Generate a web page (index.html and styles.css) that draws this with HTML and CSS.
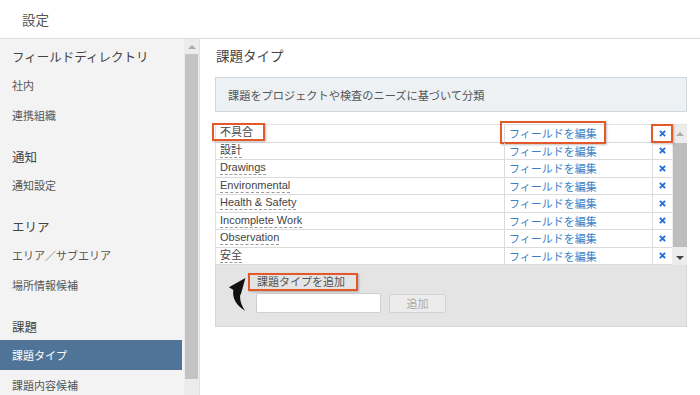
FILE: index.html
```html
<!DOCTYPE html>
<html lang="ja">
<head>
<meta charset="utf-8">
<title>設定</title>
<link rel="stylesheet" href="styles.css">
</head>
<body>
<header class="topbar"><span class="title">設定</span></header>
<div class="layout">
  <aside class="sidebar">
    <nav class="nav">
      <div class="group">
        <div class="group-title">フィールドディレクトリ</div>
        <a class="item">社内</a>
        <a class="item">連携組織</a>
      </div>
      <div class="group">
        <div class="group-title">通知</div>
        <a class="item">通知設定</a>
      </div>
      <div class="group">
        <div class="group-title">エリア</div>
        <a class="item">エリア／サブエリア</a>
        <a class="item">場所情報候補</a>
      </div>
      <div class="group">
        <div class="group-title">課題</div>
        <a class="item active">課題タイプ</a>
        <a class="item">課題内容候補</a>
      </div>
    </nav>
    <div class="vscroll">
      <div class="sb-up"></div>
      <div class="sb-thumb"></div>
    </div>
  </aside>
  <main class="main">
    <h1 class="heading">課題タイプ</h1>
    <div class="info">課題をプロジェクトや検査のニーズに基づいて分類</div>
    <div class="types">
      <div class="table-wrap">
        <div class="rows">
          <div class="row">
            <div class="c-name"><span class="name hl hl-name">不具合</span></div>
            <div class="c-edit"><span class="edit hl hl-edit">フィールドを編集</span></div>
            <div class="c-del hl hl-del"><svg class="x" viewBox="0 0 8 8"><path d="M1 1L7 7M7 1L1 7"/></svg></div>
          </div>
          <div class="row">
            <div class="c-name"><span class="name">設計</span></div>
            <div class="c-edit"><span class="edit">フィールドを編集</span></div>
            <div class="c-del"><svg class="x" viewBox="0 0 8 8"><path d="M1 1L7 7M7 1L1 7"/></svg></div>
          </div>
          <div class="row">
            <div class="c-name"><span class="name">Drawings</span></div>
            <div class="c-edit"><span class="edit">フィールドを編集</span></div>
            <div class="c-del"><svg class="x" viewBox="0 0 8 8"><path d="M1 1L7 7M7 1L1 7"/></svg></div>
          </div>
          <div class="row">
            <div class="c-name"><span class="name">Environmental</span></div>
            <div class="c-edit"><span class="edit">フィールドを編集</span></div>
            <div class="c-del"><svg class="x" viewBox="0 0 8 8"><path d="M1 1L7 7M7 1L1 7"/></svg></div>
          </div>
          <div class="row">
            <div class="c-name"><span class="name">Health &amp; Safety</span></div>
            <div class="c-edit"><span class="edit">フィールドを編集</span></div>
            <div class="c-del"><svg class="x" viewBox="0 0 8 8"><path d="M1 1L7 7M7 1L1 7"/></svg></div>
          </div>
          <div class="row">
            <div class="c-name"><span class="name">Incomplete Work</span></div>
            <div class="c-edit"><span class="edit">フィールドを編集</span></div>
            <div class="c-del"><svg class="x" viewBox="0 0 8 8"><path d="M1 1L7 7M7 1L1 7"/></svg></div>
          </div>
          <div class="row">
            <div class="c-name"><span class="name">Observation</span></div>
            <div class="c-edit"><span class="edit">フィールドを編集</span></div>
            <div class="c-del"><svg class="x" viewBox="0 0 8 8"><path d="M1 1L7 7M7 1L1 7"/></svg></div>
          </div>
          <div class="row">
            <div class="c-name"><span class="name">安全</span></div>
            <div class="c-edit"><span class="edit">フィールドを編集</span></div>
            <div class="c-del"><svg class="x" viewBox="0 0 8 8"><path d="M1 1L7 7M7 1L1 7"/></svg></div>
          </div>
        </div>
        <div class="tscroll">
          <div class="ts-up"></div>
          <div class="ts-thumb"></div>
          <div class="ts-down"></div>
        </div>
      </div>
      <div class="add">
        <svg class="curve-arrow" viewBox="0 0 24 38">
          <polygon points="1,11 19,1 14,19"/>
          <path d="M6,13 C4,23 9,31 19,37 C14,30 12,23 14,17 Z"/>
        </svg>
        <div class="add-label"><span class="hl hl-add">課題タイプを追加</span></div>
        <div class="add-row">
          <input class="add-input" type="text">
          <button class="add-btn" type="button">追加</button>
        </div>
      </div>
    </div>
  </main>
</div>
</body>
</html>
```
FILE: styles.css
```css
* { box-sizing: border-box; }
html, body { margin: 0; padding: 0; }
body {
  width: 700px;
  height: 395px;
  overflow: hidden;
  background: #fff;
  font-family: "Liberation Sans", "Noto Sans CJK JP", sans-serif;
  color: #555;
}
.topbar {
  height: 39px;
  border-bottom: 1px solid #dcdcdc;
  display: flex;
  align-items: center;
  padding-left: 22px;
}
.title { font-size: 13.5px; color: #555; }

.layout { display: flex; height: 356px; }

.sidebar {
  width: 200px;
  flex: none;
  display: flex;
  background: #f3f3f3;
  border-right: 1px solid #e2e2e2;
  overflow: hidden;
}
.nav { width: 184px; flex: none; padding-top: 9px; }
.group { margin-bottom: 18px; }
.group-title {
  font-size: 12.5px;
  line-height: 20px;
  height: 20px;
  color: #444;
  padding-left: 12px;
  margin-bottom: 2px;
}
.item {
  display: flex;
  align-items: center;
  height: 30px;
  padding-left: 12px;
  font-size: 11px;
  color: #555;
  margin-right: 2px;
}
.item.active { background: #4f7497; color: #fff; }

.vscroll {
  width: 15px;
  flex: none;
  background: #ececec;
  display: flex;
  flex-direction: column;
  align-items: center;
}
.sb-up {
  margin-top: 6px;
  width: 0; height: 0;
  border-left: 4px solid transparent;
  border-right: 4px solid transparent;
  border-bottom: 4px solid #aaa;
}
.sb-thumb {
  margin-top: 5px;
  width: 13px;
  height: 325px;
  background: #c3c3c3;
}

.main { flex: 1; padding: 8px 13px 0 15px; }
.heading {
  margin: 0;
  font-weight: normal;
  font-size: 13.5px;
  line-height: 20px;
  color: #444;
  padding-left: 1px;
}
.info {
  margin-top: 10px;
  height: 35px;
  background: #edf1f4;
  border: 1px solid #cfd6dc;
  display: flex;
  align-items: center;
  padding-left: 12px;
  font-size: 11.2px;
  color: #555;
}

.types { margin-top: 12px; }
.table-wrap {
  display: flex;
  border-top: 1px solid #e3e3e3;
  border-left: 1px solid #e3e3e3;
}
.rows { width: 456px; }
.row {
  display: grid;
  grid-template-columns: 288px 148px 20px;
  height: 17.5px;
  border-bottom: 1px solid #dcdcdc;
  font-size: 11px;
}
.c-name, .c-edit, .c-del { display: flex; align-items: center; position: relative; }
.c-name { padding-left: 4px; }
.c-edit { border-left: 1px solid #dcdcdc; padding-left: 4px; }
.c-del { border-left: 1px solid #dcdcdc; justify-content: center; }
.name {
  color: #444;
  line-height: 13px;
  border-bottom: 1px dashed #9a9a9a;
}
.edit { color: #3f7fc6; }
.x { width: 7px; height: 7px; }
.x path { stroke: #2a6fd6; stroke-width: 2.2; fill: none; }

.tscroll {
  width: 15px;
  flex: none;
  background: #ececec;
  display: flex;
  flex-direction: column;
  align-items: center;
}
.ts-up {
  margin-top: 7px;
  width: 0; height: 0;
  border-left: 4px solid transparent;
  border-right: 4px solid transparent;
  border-bottom: 4px solid #aaa;
}
.ts-thumb { margin-top: 7px; width: 14px; height: 104px; background: #bdbdbd; }
.ts-down {
  margin-top: 9px;
  width: 0; height: 0;
  border-left: 4px solid transparent;
  border-right: 4px solid transparent;
  border-top: 4px solid #444;
}

.add {
  position: relative;
  background: #e4e4e4;
  border: 1px solid #d6d6d6;
  border-top: none;
  padding: 9px 0 13px 40px;
}
.add-label { font-size: 11px; color: #555; line-height: 16px; height: 18px; padding-left: 1px; }
.add-row { display: flex; align-items: center; gap: 8px; margin-top: 1px; }
.add-input {
  width: 125px;
  height: 20px;
  border: 1px solid #cfcfcf;
  border-radius: 2px;
  background: #fff;
  margin: 0;
}
.add-btn {
  width: 57px;
  height: 19px;
  margin: 0;
  padding: 0;
  border: 1px solid #d2d2d2;
  border-radius: 2px;
  background: #ececec;
  color: #aaa;
  font-family: "Liberation Sans", "Noto Sans CJK JP", sans-serif;
  font-size: 11px;
}
.curve-arrow {
  position: absolute;
  left: 12px;
  top: 12px;
  width: 22px;
  height: 35px;
  fill: #111;
}

/* annotation highlight boxes */
.hl { position: relative; }
.hl::after {
  content: "";
  position: absolute;
  border: 2px solid #e4592a;
  box-shadow: 1px 1px 2px rgba(0,0,0,0.25);
}
.hl-name::after { left: -8px; right: -12px; top: -3px; bottom: -2px; }
.hl-edit::after { left: -9px; right: -9px; top: -4px; bottom: -3px; }
.hl-del::after { left: -2px; right: -1px; top: -1px; bottom: -1px; }
.hl-add::after { left: -9px; right: -13px; top: -3px; bottom: -3px; }
```
